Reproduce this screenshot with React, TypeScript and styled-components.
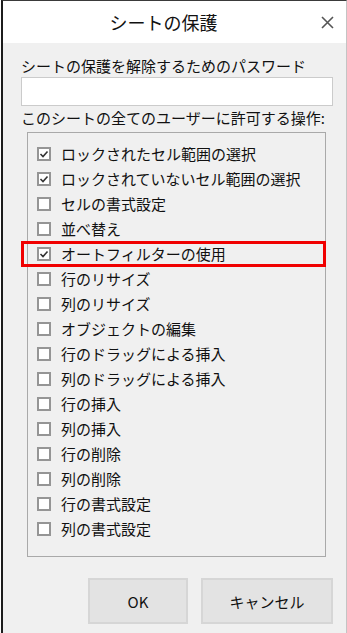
import React from 'react';
import styled, { createGlobalStyle } from 'styled-components';

const GlobalStyle = createGlobalStyle`
  html, body {
    margin: 0;
    padding: 0;
    background: #ffffff;
  }
  body {
    font-family: "Noto Sans CJK JP", "Noto Sans", sans-serif;
    color: #111;
  }
`;

const Dialog = styled.div`
  box-sizing: border-box;
  width: 346px;
  height: 633px;
  margin-left: 1px;
  border-top: 1px solid #3a3a3a;
  border-left: 2px solid #1c1c1c;
  border-right: 1px solid #c4c4c4;
  background: #f0f0f0;
  display: flex;
  flex-direction: column;
`;

const TitleBar = styled.div`
  height: 42px;
  flex-shrink: 0;
  background: #ffffff;
  display: flex;
  align-items: center;
`;

const Title = styled.div`
  flex: 1;
  text-align: center;
  padding-left: 12px;
  font-size: 18px;
  line-height: 22px;
  color: #111;
`;

const CloseButton = styled.button`
  width: 30px;
  height: 30px;
  margin-right: 4px;
  border: none;
  background: transparent;
  padding: 0;
  display: flex;
  align-items: center;
  justify-content: center;
  cursor: pointer;
`;

const Body = styled.div`
  padding: 13px 13px 0 18px;
  display: flex;
  flex-direction: column;
`;

const Label = styled.div<{ gap?: number }>`
  font-size: 15px;
  line-height: 20px;
  white-space: nowrap;
  margin-top: ${props => props.gap || 0}px;
`;

const PasswordInput = styled.input`
  box-sizing: border-box;
  height: 29px;
  width: 100%;
  margin-top: 1px;
  border: 1px solid #cbcbcb;
  background: #fff;
  outline: none;
`;

const ListArea = styled.div`
  position: relative;
  margin-top: 4px;
`;

const ListBox = styled.div`
  box-sizing: border-box;
  margin-left: 6px;
  width: 299px;
  border: 1px solid #a9a9a9;
  padding: 8px 0 15px 9px;
  display: flex;
  flex-direction: column;
`;

const Row = styled.label`
  height: 25px;
  display: flex;
  align-items: center;
  gap: 10px;
  font-size: 15px;
  white-space: nowrap;
`;

const Box = styled.span`
  box-sizing: border-box;
  width: 14px;
  height: 14px;
  border: 2px solid #959595;
  background: #fff;
  display: flex;
  align-items: center;
  justify-content: center;
  flex-shrink: 0;
`;

const Highlight = styled.div`
  position: absolute;
  left: 0;
  top: 109px;
  width: 305px;
  height: 26px;
  box-sizing: border-box;
  border: 3px solid #f00000;
  pointer-events: none;
`;

const Footer = styled.div`
  display: flex;
  justify-content: flex-end;
  gap: 13px;
  margin-top: 21px;
`;

const Button = styled.button<{ w: number }>`
  box-sizing: border-box;
  width: ${props => props.w}px;
  height: 46px;
  background: #e3e3e3;
  border: 2px solid #d6d6d6;
  font-family: "Noto Sans CJK JP", "Noto Sans", sans-serif;
  font-size: 15px;
  color: #111;
  cursor: pointer;
`;

const items: [string, boolean][] = [
  ['ロックされたセル範囲の選択', true],
  ['ロックされていないセル範囲の選択', true],
  ['セルの書式設定', false],
  ['並べ替え', false],
  ['オートフィルターの使用', true],
  ['行のリサイズ', false],
  ['列のリサイズ', false],
  ['オブジェクトの編集', false],
  ['行のドラッグによる挿入', false],
  ['列のドラッグによる挿入', false],
  ['行の挿入', false],
  ['列の挿入', false],
  ['行の削除', false],
  ['列の削除', false],
  ['行の書式設定', false],
  ['列の書式設定', false]
];

const Check = ({ checked }: { checked: boolean }) => (
  <Box>
    {checked && (
      <svg width="10" height="10" viewBox="0 0 10 10">
        <polyline points="1.5,5 4,7.5 8.5,2.5" fill="none" stroke="#333" strokeWidth="1.6" />
      </svg>
    )}
  </Box>
);

export default function App() {
  return (
    <>
      <GlobalStyle />
      <Dialog>
        <TitleBar>
          <Title>シートの保護</Title>
          <CloseButton aria-label="閉じる">
            <svg width="13" height="13" viewBox="0 0 13 13">
              <path d="M1 1 L12 12 M12 1 L1 12" stroke="#555" strokeWidth="1.6" />
            </svg>
          </CloseButton>
        </TitleBar>
        <Body>
          <Label>シートの保護を解除するためのパスワード</Label>
          <PasswordInput type="password" />
          <Label gap={2}>このシートの全てのユーザーに許可する操作:</Label>
          <ListArea>
            <ListBox>
              {items.map(([text, checked]) => (
                <Row key={text}>
                  <Check checked={checked} />
                  {text}
                </Row>
              ))}
            </ListBox>
            <Highlight />
          </ListArea>
          <Footer>
            <Button w={100}>OK</Button>
            <Button w={132}>キャンセル</Button>
          </Footer>
        </Body>
      </Dialog>
    </>
  );
}
